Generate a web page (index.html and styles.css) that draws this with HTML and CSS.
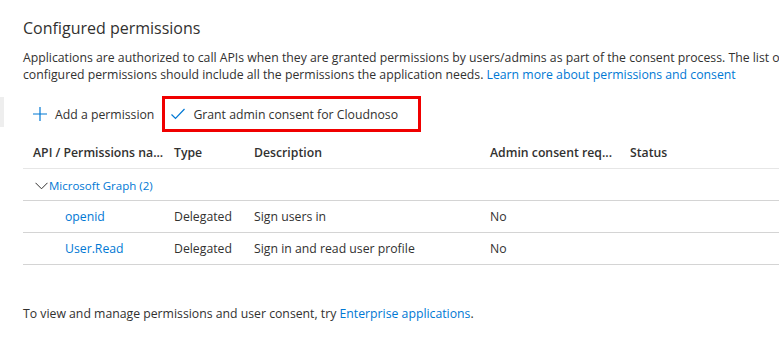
FILE: index.html
```html
<!DOCTYPE html>
<html>
<head>
<meta charset="utf-8">
<link rel="stylesheet" href="styles.css">
</head>
<body>
<div class="page">
  <h2 class="title">Configured permissions</h2>
  <p class="intro">Applications are authorized to call APIs when they are granted permissions by users/admins as part of the consent process. The list of<br>configured permissions should include all the permissions the application needs. <a class="link" href="#">Learn more about permissions and consent</a></p>

  <div class="toolbar">
    <div class="side-tab"></div>
    <button class="tool">
      <svg class="icon" width="16" height="16" viewBox="0 0 16 16"><path d="M8 1v14M1 8h14" stroke="#0078d4" stroke-width="1.2" fill="none"/></svg>
      <span>Add a permission</span>
    </button>
    <button class="tool highlighted">
      <svg class="icon" width="16" height="16" viewBox="0 0 16 16"><path d="M1.5 8.5l4 4L14.5 3" stroke="#0078d4" stroke-width="1.2" fill="none"/></svg>
      <span>Grant admin consent for Cloudnoso</span>
    </button>
  </div>

  <div class="grid">
    <div class="row head">
      <div class="c1">API / Permissions na...</div>
      <div>Type</div>
      <div>Description</div>
      <div>Admin consent req...</div>
      <div>Status</div>
    </div>
    <div class="row group">
      <div class="c1 grp">
        <svg width="13" height="8" viewBox="0 0 13 8"><path d="M0.5 0.8l6 6 6-6" stroke="#323130" stroke-width="1" fill="none"/></svg>
        <a class="link" href="#">Microsoft Graph (2)</a>
      </div>
    </div>
    <div class="row">
      <div class="c1 perm"><a class="link" href="#">openid</a></div>
      <div>Delegated</div>
      <div>Sign users in</div>
      <div>No</div>
      <div></div>
    </div>
    <div class="row">
      <div class="c1 perm"><a class="link" href="#">User.Read</a></div>
      <div>Delegated</div>
      <div>Sign in and read user profile</div>
      <div>No</div>
      <div></div>
    </div>
  </div>

  <p class="footer">To view and manage permissions and user consent, try <a class="link" href="#">Enterprise applications</a>.</p>
</div>
</body>
</html>
```

FILE: styles.css
```css
html, body {
  margin: 0;
  padding: 0;
  background: #fff;
  overflow: hidden;
}
body {
  font-family: "Segoe UI", "Open Sans", sans-serif;
  font-size: 12.25px;
  color: #323130;
  width: 779px;
  height: 342px;
}
.page {
  padding-left: 23px;
  padding-top: 17px;
  white-space: nowrap;
}
.title {
  margin: 0;
  font-size: 16px;
  font-weight: 400;
  line-height: 23px;
  color: #323130;
}
.intro {
  margin: 9px 0 0 0;
  line-height: 17px;
}
.link {
  color: #0078d4;
  text-decoration: none;
}
.toolbar {
  display: flex;
  align-items: center;
  margin-top: 13px;
  margin-left: -23px;
  height: 36px;
}
.side-tab {
  width: 4px;
  height: 30px;
  background: #eeeeee;
  align-self: flex-start;
  margin-top: 1px;
  margin-right: 23px;
}
.tool {
  display: flex;
  align-items: center;
  gap: 7px;
  border: 3px solid transparent;
  background: none;
  font: inherit;
  color: #323130;
  height: 36px;
  padding: 0 17px 0 2px;
}
.tool.highlighted {
  border-color: #f00000;
  padding: 0 20px 0 5px;
  margin-left: -12px;
}
.grid {
  margin-top: 5px;
}
.row {
  display: grid;
  grid-template-columns: 151px 80px 236px 140px 1fr;
  height: 31px;
  align-items: center;
  border-bottom: 1px solid #d4d4d4;
}
.row.head {
  font-weight: 600;
  border-bottom-color: #e6e6e6;
  padding-bottom: 1px;
  height: 30px;
}
.c1 {
  padding-left: 10px;
}
.row.group {
  font-size: 11.5px;
  padding-top: 2px;
  height: 29px;
}
.grp {
  grid-column: 1 / span 5;
  display: flex;
  align-items: center;
  gap: 1px;
  padding-left: 12px;
}
.perm {
  padding-left: 42px;
}
.footer {
  margin: 40px 0 0 0;
}
```
